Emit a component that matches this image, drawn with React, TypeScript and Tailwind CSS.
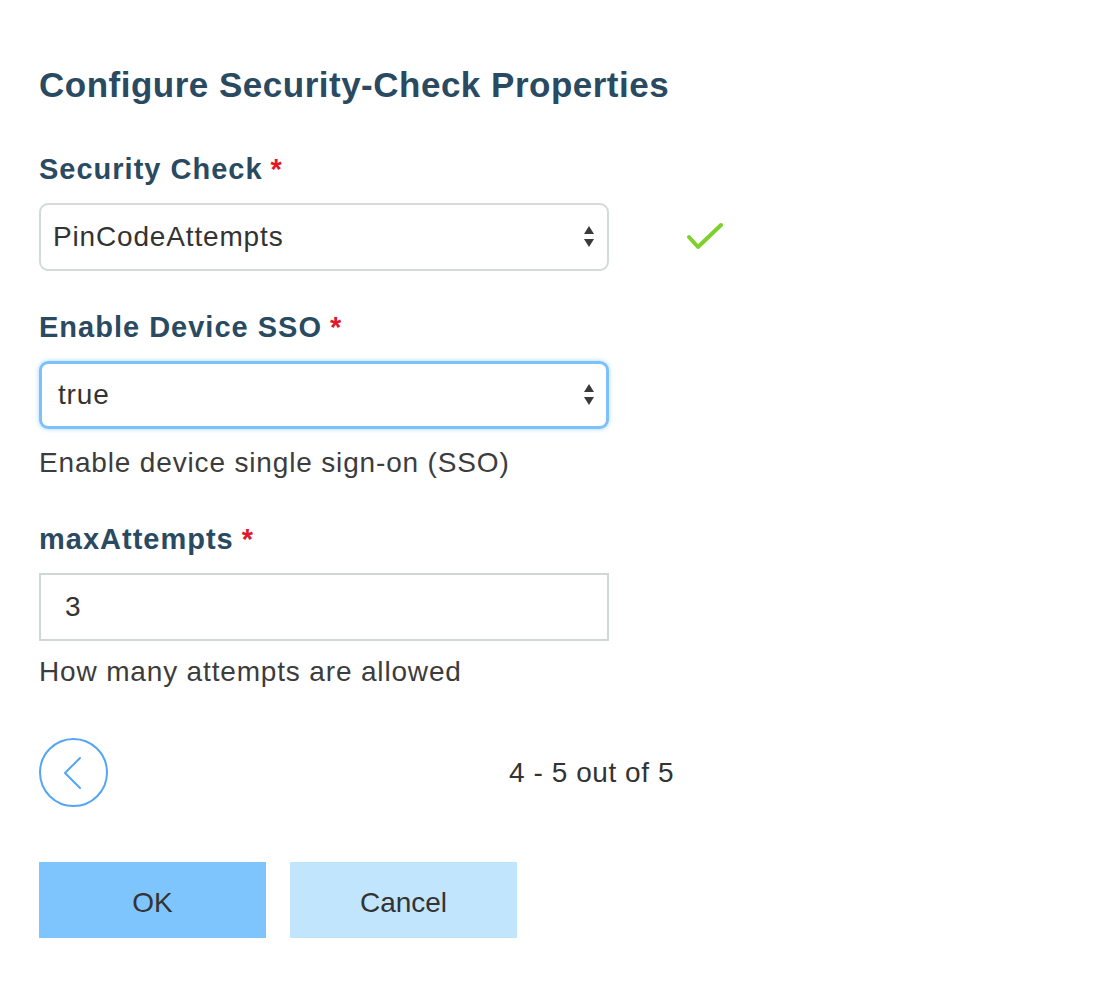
import React from 'react';

const font = { fontFamily: '"Liberation Sans", Arial, sans-serif' };

function SelectArrows() {
  return (
    <svg width="12" height="24" viewBox="0 0 12 24" className="shrink-0">
      <polygon points="6,1 11,9 1,9" fill="#3a3a3a" />
      <polygon points="1,14 11,14 6,22" fill="#3a3a3a" />
    </svg>
  );
}

function Label({ text }: { text: string }) {
  return (
    <div className="text-[29px] leading-[32px] font-bold tracking-[1px] text-[#2a4a62]">
      {text}
      <span className="ml-[8px] text-[#e3172c]">*</span>
    </div>
  );
}

export default function App() {
  return (
    <div className="w-[1102px] h-[1008px] bg-white pl-[39px] pt-[65px]" style={font}>
      <h1 className="text-[35px] leading-[40px] font-bold tracking-[0.5px] text-[#2a4a62]">
        Configure Security-Check Properties
      </h1>

      {/* Security Check */}
      <div className="mt-[48px]">
        <Label text="Security Check" />
        <div className="mt-[18px] flex items-center">
          <div className="w-[570px] h-[68px] rounded-[9px] border-2 border-[#d3dada] flex items-center justify-between pl-[12px] pr-[12px]">
            <span className="text-[28px] tracking-[0.03em] text-[#333]">PinCodeAttempts</span>
            <SelectArrows />
          </div>
          <svg width="40" height="32" viewBox="0 0 40 32" className="ml-[76px]">
            <polyline points="4,16 13,26 36,4" fill="none" stroke="#7fd02a" strokeWidth="4" strokeLinecap="round" strokeLinejoin="round" />
          </svg>
        </div>
      </div>

      {/* Enable Device SSO */}
      <div className="mt-[40px]">
        <Label text="Enable Device SSO" />
        <div className="mt-[18px] w-[570px] h-[68px] rounded-[9px] border-[3px] border-[#7cc1fb] shadow-[0_0_5px_#a9d6fd] flex items-center justify-between pl-[16px] pr-[11px]">
          <span className="text-[28px] tracking-[0.03em] text-[#333]">true</span>
          <SelectArrows />
        </div>
        <p className="mt-[18px] text-[28px] leading-[32px] tracking-[0.03em] text-[#3c3c3c]">
          Enable device single sign-on (SSO)
        </p>
      </div>

      {/* maxAttempts */}
      <div className="mt-[44px]">
        <Label text="maxAttempts" />
        <div className="mt-[18px] w-[570px] h-[68px] border-2 border-[#cfd7d7] flex items-center pl-[24px]">
          <span className="text-[28px] text-[#333]">3</span>
        </div>
        <p className="mt-[15px] text-[28px] leading-[32px] tracking-[0.03em] text-[#3c3c3c]">
          How many attempts are allowed
        </p>
      </div>

      {/* Pager */}
      <div className="mt-[50px] flex items-center">
        <button className="w-[69px] h-[69px] rounded-full border-[2.5px] border-[#55a5f5] flex items-center justify-center">
          <svg width="24" height="36" viewBox="0 0 24 36" className="ml-[-2px]">
            <polyline points="19,3 4,18 19,33" fill="none" stroke="#55a5f5" strokeWidth="2" strokeLinecap="round" strokeLinejoin="round" />
          </svg>
        </button>
        <span className="ml-[401px] text-[28px] tracking-[0.02em] text-[#333]">4 - 5 out of 5</span>
      </div>

      {/* Actions */}
      <div className="mt-[55px] flex gap-[24px]">
        <button className="w-[227px] h-[76px] pt-[6px] bg-[#7fc5fd] text-[28px] text-[#333]">OK</button>
        <button className="w-[227px] h-[76px] pt-[6px] bg-[#c2e5fe] text-[28px] text-[#333]">Cancel</button>
      </div>
    </div>
  );
}
